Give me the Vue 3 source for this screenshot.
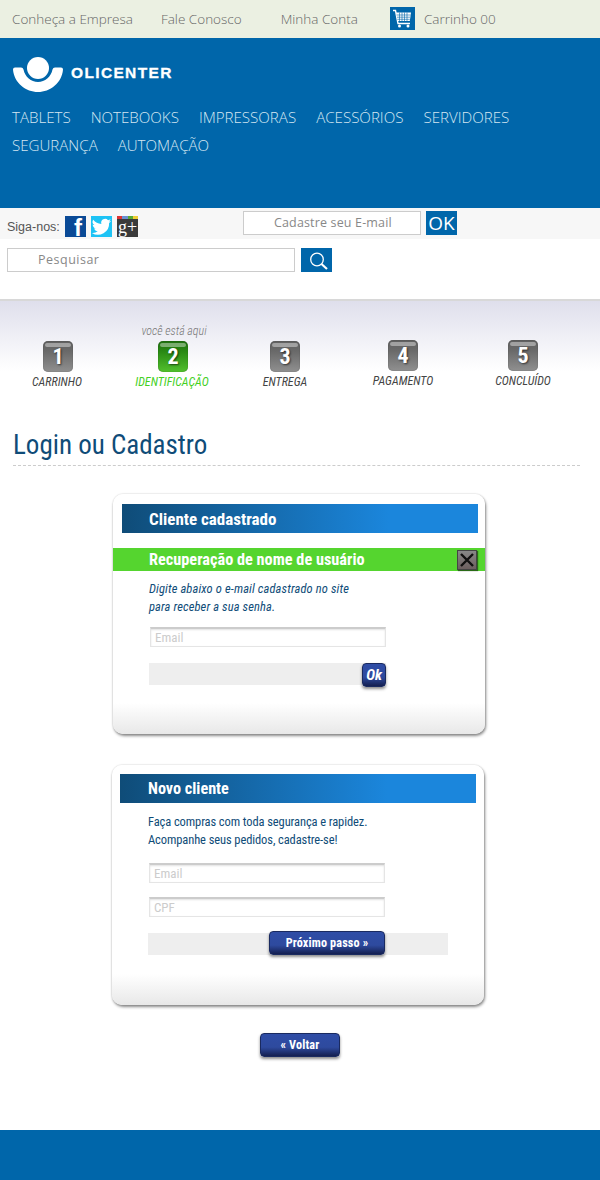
<template>
  <div class="page">
    <div class="topbar">
      <a class="tlink l1">Conheça a Empresa</a>
      <a class="tlink l2">Fale Conosco</a>
      <a class="tlink l3">Minha Conta</a>
      <span class="cartbox">
        <svg width="25" height="23" viewBox="0 0 25 23">
          <path d="M3 3.500h2.500l2.500 13h12" fill="none" stroke="#fff" stroke-width="1.400" />
          <path d="M6 5.500h15l-1.200 8.500H7.500z" fill="#fff" />
          <path d="M6.500 8h14M7 10.200h13M7.300 12.300h12.500M9.500 5.500v8.500M12 5.500v8.500M14.500 5.500v8.500M17 5.500v8.500" stroke="#0066aa" stroke-width=".6" />
          <circle cx="9.500" cy="19" r="1.500" fill="#fff" />
          <circle cx="18" cy="19" r="1.500" fill="#fff" />
        </svg>
      </span>
      <a class="tlink l4">Carrinho 00</a>
    </div>

    <div class="head">
      <div class="logo">
        <svg width="52" height="38" viewBox="0 0 52 38">
          <circle cx="26" cy="11" r="11" fill="#fff" />
          <path d="M1 12.500Q1 10.500 3 10.500H9Q11 10.500 11.500 12.500C13 20 19 25 26 25S39 20 40.500 12.500Q41 10.500 43 10.500H49Q51 10.500 51 12.500C50 26 38 35 26 35S2 26 1 12.500Z" fill="#fff" />
        </svg>
        <span class="logotext">OLICENTER</span>
      </div>
      <nav class="nav">
        <a v-for="n in menu" :key="n">{{ n }}</a>
      </nav>
    </div>

    <div class="social">
      <span class="siga">Siga-nos:</span>
      <span class="ic fb">f</span>
      <span class="ic tw">
        <svg width="21" height="21" viewBox="0 0 24 24">
          <path d="M23 5.500c-.8.400-1.700.600-2.600.700.900-.600 1.600-1.400 2-2.500-.900.500-1.800.900-2.900 1.100A4.500 4.500 0 0 0 11.800 9 12.800 12.800 0 0 1 2.500 4.300a4.500 4.500 0 0 0 1.400 6c-.700 0-1.400-.200-2-.600 0 2.200 1.500 4 3.600 4.500-.700.200-1.400.200-2 .100.600 1.800 2.200 3.100 4.200 3.100A9 9 0 0 1 1 19.300a12.800 12.800 0 0 0 19.700-11.400c.900-.600 1.700-1.400 2.300-2.400z" fill="#fff" />
        </svg>
      </span>
      <span class="ic gp"><i class="strip"></i>g+</span>
      <input class="news" placeholder="Cadastre seu E-mail" />
      <button class="okbtn">OK</button>
    </div>

    <div class="search">
      <input class="q" placeholder="Pesquisar" />
      <button class="qbtn">
        <svg width="22" height="20" viewBox="0 0 22 20">
          <circle cx="9" cy="8.500" r="6.300" fill="none" stroke="#fff" stroke-width="1.300" />
          <path d="M13.500 13l5.500 5" stroke="#fff" stroke-width="2.200" />
        </svg>
      </button>
    </div>

    <div class="steps">
      <div v-for="s in steps" :key="s.n" class="step" :class="{ on: s.on, up: s.n > 3 }">
        <span v-if="s.on" class="here">você está aqui</span>
        <span class="num">{{ s.n }}</span>
        <span class="lbl">{{ s.label }}</span>
      </div>
    </div>

    <h1 class="title">Login ou Cadastro</h1>

    <section class="card c1">
      <h2 class="bar1">Cliente cadastrado</h2>
      <div class="green">
        <h3>Recuperação de nome de usuário</h3>
        <button class="close">
          <svg width="14" height="14" viewBox="0 0 14 14">
            <path d="M1 1l12 12M13 1L1 13" stroke="#111" stroke-width="2.400" />
          </svg>
        </button>
      </div>
      <p class="txt it">Digite abaixo o e-mail cadastrado no site<br />para receber a sua senha.</p>
      <input class="field f1" placeholder="Email" />
      <div class="graybar g1">
        <button class="btn ok">Ok</button>
      </div>
    </section>

    <section class="card c2">
      <h2 class="bar1">Novo cliente</h2>
      <p class="txt">Faça compras com toda segurança e rapidez.<br />Acompanhe seus pedidos, cadastre-se!</p>
      <input class="field f2" placeholder="Email" />
      <input class="field f3" placeholder="CPF" />
      <div class="graybar g2">
        <button class="btn next">Próximo passo »</button>
      </div>
    </section>

    <div class="back">
      <button class="btn voltar">« Voltar</button>
    </div>

    <div class="foot"></div>
  </div>
</template>

<script setup>
const menu = ['TABLETS', 'NOTEBOOKS', 'IMPRESSORAS', 'ACESSÓRIOS', 'SERVIDORES', 'SEGURANÇA', 'AUTOMAÇÃO']
const steps = [
  { n: 1, label: 'CARRINHO' },
  { n: 2, label: 'IDENTIFICAÇÃO', on: true },
  { n: 3, label: 'ENTREGA' },
  { n: 4, label: 'PAGAMENTO' },
  { n: 5, label: 'CONCLUÍDO' },
]
</script>

<style>
body { background: #fff; }
input::placeholder { opacity: 1; }
</style>

<style scoped>
.page {
  width: 600px;
  height: 1180px;
  overflow: hidden;
  background: #fff;
  font-family: Roboto, sans-serif;
  font-stretch: 75%;
}
.topbar {
  height: 38px;
  background: #ebf0e2;
  display: flex;
  align-items: center;
  font-family: "Open Sans", sans-serif;
  font-stretch: 100%;
  font-weight: 300;
  font-size: 13.500px;
  color: #666;
}
.l1 { margin-left: 12px; }
.l2 { margin-left: 28px; }
.l3 { margin-left: 39px; }
.l4 { margin-left: 9px; }
.cartbox {
  width: 25px;
  height: 23px;
  margin-left: 32px;
  margin-top: -1px;
  background: #0066aa;
  display: block;
}
.cartbox svg { display: block; }
.head {
  height: 170px;
  background: #0066aa;
  padding: 20px 12px 0;
  box-sizing: border-box;
  font-family: "Open Sans", sans-serif;
  font-stretch: 100%;
}
.logo { display: flex; align-items: center; height: 36px; }
.logo svg { display: block; }
.logotext {
  margin-left: 7px;
  margin-top: -6px;
  font-family: "Liberation Sans", sans-serif;
  font-weight: 700;
  font-size: 15.500px;
  letter-spacing: 1.350px;
  -webkit-text-stroke: .3px #fff;
  color: #fff;
}
.nav {
  margin-top: 9px;
  display: flex;
  flex-wrap: wrap;
  column-gap: 20px;
  font-weight: 300;
  font-size: 15.100px;
  line-height: 28px;
  color: #d5e6f2;
}
.social {
  height: 31px;
  background: #f7f7f7;
  display: flex;
  align-items: center;
  font-family: "Liberation Sans", sans-serif;
  font-stretch: 100%;
}
.siga { margin-left: 7px; margin-top: 6px; font-size: 12.500px; color: #555; width: 58px; }
.ic {
  position: relative;
  width: 21px;
  height: 21px;
  margin-top: 5px;
  margin-right: 5px;
  display: block;
  color: #fff;
  text-align: center;
}
.fb { background: #0a4a96; font-weight: 700; font-size: 24px; line-height: 23px; padding-left: 5px; width: 16px; }
.tw { background: #1ec3f5; }
.tw svg { display: block; }
.gp { background: #3a3a3a; font-family: "Liberation Serif", serif; font-size: 18px; line-height: 23px; }
.strip {
  position: absolute;
  left: 0;
  top: 0;
  right: 0;
  height: 3px;
  background: linear-gradient(90deg, #d33 0 25%, #6a8fd0 25% 50%, #5a3 50% 75%, #ec3 75%);
}
.news {
  width: 178px;
  height: 24px;
  margin-left: 100px;
  margin-top: -2px;
  box-sizing: border-box;
  border: 1px solid #ccc;
  background: #fff;
  padding: 0 0 0 30px;
  font-family: "Open Sans", sans-serif;
  font-size: 12.500px;
  letter-spacing: .15px;
  outline: none;
}
.news::placeholder { color: #888; }
.okbtn {
  width: 31px;
  height: 24px;
  margin-left: 5px;
  margin-top: -2px;
  padding: 0;
  border: 0;
  background: #0066aa;
  color: #fff;
  font-family: "Open Sans", sans-serif;
  font-size: 19px;
  line-height: 24px;
}
.search {
  height: 62px;
  display: flex;
  align-items: flex-start;
  padding: 9px 0 0 7px;
  box-sizing: border-box;
  border-bottom: 2px solid #d8d8d8;
}
.q {
  width: 288px;
  height: 24px;
  box-sizing: border-box;
  border: 1px solid #ccc;
  padding: 0 0 2px 30px;
  font-family: "Open Sans", sans-serif;
  font-size: 12.500px;
  letter-spacing: .5px;
  outline: none;
}
.q::placeholder { color: #888; }
.qbtn {
  width: 31px;
  height: 24px;
  margin-left: 6px;
  padding: 3px 0 0 5px;
  border: 0;
  background: #0066aa;
  display: block;
}
.steps {
  height: 100px;
  padding-top: 40px;
  box-sizing: border-box;
  background: linear-gradient(#dfdfec, #fff 70px);
  display: grid;
  grid-template-columns: 114px 116px 110px 126px 114px;
}
.step { position: relative; display: flex; flex-direction: column; align-items: center; }
.step:nth-child(-n+2) .num { margin-left: 2px; }
.up { margin-top: -1px; }
.here {
  position: absolute;
  top: -17px;
  margin-left: 4px;
  font-style: italic;
  font-weight: 300;
  font-size: 12px;
  color: #777;
  white-space: nowrap;
}
.num {
  position: relative;
  width: 30px;
  height: 31px;
  border-radius: 5px;
  background: linear-gradient(#606060 0, #6a6a6a 35%, #909090);
  color: #fff;
  font-weight: 700;
  font-size: 22px;
  line-height: 32px;
  text-align: center;
  text-shadow: 1px 1px 2px rgba(0, 0, 0, .6);
  box-shadow: inset 0 0 1px rgba(0, 0, 0, .5);
}
.num::before {
  content: "";
  position: absolute;
  left: 2px;
  right: 2px;
  top: 2px;
  height: 4px;
  border-radius: 2px;
  background: rgba(255, 255, 255, .4);
}
.on .num { background: linear-gradient(#1f6f10 0, #2a8a14 35%, #52c02e); }
.lbl {
  margin-top: 2px;
  font-style: italic;
  font-size: 12px;
  line-height: 16px;
  color: #444;
  white-space: nowrap;
}
.on .lbl { color: #45d01f; }
.title {
  margin: 27px 20px 0 13px;
  height: 37px;
  font-weight: 400;
  font-size: 27px;
  line-height: 35px;
  color: #0f4c78;
  border-bottom: 1px dashed #ccc;
}
.card {
  position: relative;
  width: 372px;
  height: 240px;
  box-sizing: border-box;
  border-radius: 10px;
  background: linear-gradient(#fff 209px, #e8e8e8);
  box-shadow: 1px 2px 3px rgba(0, 0, 0, .45), 0 0 2px rgba(0, 0, 0, .2);
  overflow: hidden;
}
.c1 { margin: 28px 0 0 113px; padding-top: 10px; }
.c2 { margin: 31px 0 0 112px; padding-top: 9px; }
.bar1 {
  height: 29px;
  margin: 0 7px 0 9px;
  padding-left: 27px;
  background: linear-gradient(90deg, #0f4c78, #1b86dc 75%);
  color: #fff;
  font-weight: 700;
  font-size: 17px;
  line-height: 30px;
}
.c2 .bar1 { margin: 0 8px; padding-left: 28px; font-size: 16.200px; }
.green {
  height: 23px;
  margin-top: 15px;
  padding-left: 36px;
  display: flex;
  align-items: center;
  background: #55d52f;
  color: #fff;
}
.green h3 { margin: 0; font-size: 16.300px; font-weight: 700; }
.close {
  width: 20px;
  height: 20px;
  margin-left: auto;
  margin-right: 8px;
  padding: 0;
  border: 1px solid #444;
  background: linear-gradient(#888, #6c5f5f);
  box-shadow: 1px 1px 1px rgba(0, 0, 0, .5);
  display: flex;
  align-items: center;
  justify-content: center;
}
.txt {
  margin: 10px 0 0 36px;
  font-size: 12.500px;
  line-height: 18px;
  letter-spacing: -.1px;
  color: #0f4c78;
}
.it { font-style: italic; margin-top: 9px; letter-spacing: .12px; }
.field {
  display: block;
  width: 236px;
  height: 20px;
  box-sizing: border-box;
  border: 1px solid #e5e5e5;
  border-top: 2px solid #ccc;
  box-shadow: inset 0 1px 2px rgba(0, 0, 0, .12);
  padding: 0 0 0 4px;
  font-family: inherit;
  font-stretch: 75%;
  font-size: 13px;
  outline: none;
}
.field::placeholder { color: #ccc; }
.f1 { margin: 11px 0 0 37px; }
.f2 { margin: 14px 0 0 37px; }
.f3 { margin: 14px 0 0 37px; }
.graybar {
  height: 22px;
  background: #eee;
  display: flex;
  justify-content: flex-end;
  align-items: flex-start;
}
.g1 { width: 237px; margin: 16px 0 0 36px; }
.g2 { width: 300px; margin: 16px 0 0 36px; padding-right: 63px; box-sizing: border-box; }
.btn {
  padding: 0;
  border: 1px solid #1a2a60;
  border-radius: 4px;
  background: linear-gradient(#2f4da6 0, #2e4a9e 60%, #141f50);
  box-shadow: 0 2px 3px rgba(0, 0, 0, .45);
  color: #fff;
  font-family: inherit;
  font-stretch: 75%;
  font-weight: 700;
  font-size: 12.200px;
  letter-spacing: .15px;
}
.ok { width: 24px; height: 24px; font-style: italic; font-size: 15px; letter-spacing: 0; }
.next { width: 116px; height: 24px; margin-top: -2px; }
.back { margin-top: 28px; display: flex; justify-content: center; }
.voltar { width: 80px; height: 24px; }
.foot { height: 50px; margin-top: 73px; background: #0066aa; }
</style>
